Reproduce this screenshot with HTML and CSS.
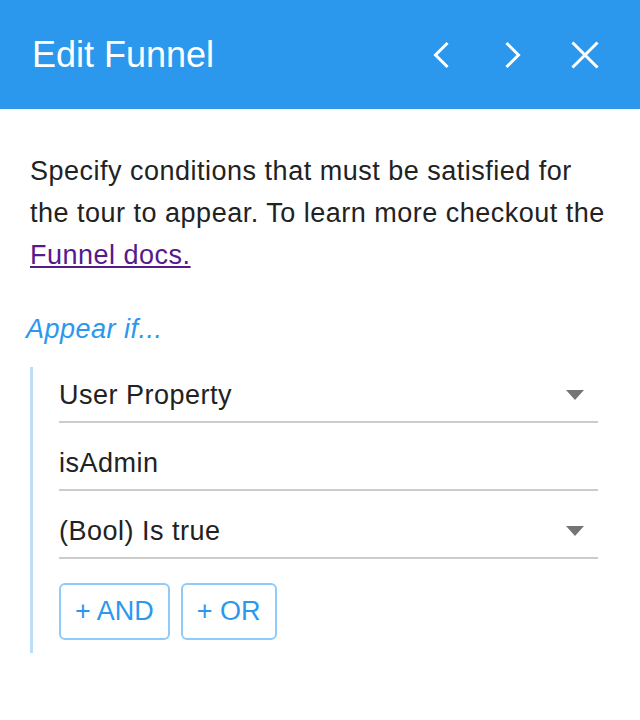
FILE: index.html
```html
<!DOCTYPE html>
<html lang="en">
<head>
<meta charset="utf-8">
<title>Edit Funnel</title>
<link rel="stylesheet" href="styles.css">
</head>
<body>
<div class="panel">
  <header class="header">
    <h1 class="title">Edit Funnel</h1>
    <div class="actions">
      <svg class="icon" viewBox="0 0 40 40" width="40" height="40"><path d="M25.5 9 L14.5 20 L25.5 31" fill="none" stroke="#fff" stroke-width="3" stroke-linecap="square"/></svg>
      <svg class="icon" viewBox="0 0 40 40" width="40" height="40"><path d="M14.5 9 L25.5 20 L14.5 31" fill="none" stroke="#fff" stroke-width="3" stroke-linecap="square"/></svg>
      <svg class="icon" viewBox="0 0 40 40" width="40" height="40"><path d="M8.5 8.5 L31.5 31.5 M31.5 8.5 L8.5 31.5" fill="none" stroke="#fff" stroke-width="3" stroke-linecap="square"/></svg>
    </div>
  </header>
  <main class="content">
    <p class="intro">Specify conditions that must be satisfied for the tour to appear. To learn more checkout the <a class="link" href="#">Funnel docs.</a></p>
    <h2 class="appear">Appear if...</h2>
    <div class="conditions">
      <div class="field">
        <span class="value">User Property</span>
        <span class="caret"></span>
      </div>
      <div class="field">
        <span class="value">isAdmin</span>
      </div>
      <div class="field">
        <span class="value">(Bool) Is true</span>
        <span class="caret"></span>
      </div>
      <div class="buttons">
        <button class="btn">+ AND</button>
        <button class="btn">+ OR</button>
      </div>
    </div>
  </main>
</div>
</body>
</html>
```
FILE: styles.css
```css
* { box-sizing: border-box; }

html, body {
  margin: 0;
  padding: 0;
  background: #ffffff;
}

body {
  font-family: "Liberation Sans", Arial, sans-serif;
  color: #222222;
}

.header {
  height: 109px;
  background: #2b98ee;
  display: flex;
  align-items: center;
  justify-content: space-between;
  padding: 0 35px 0 32px;
}

.title {
  margin: 0;
  font-size: 36px;
  font-weight: normal;
  color: #ffffff;
  line-height: 40px;
}

.actions {
  display: flex;
  align-items: center;
  gap: 32px;
}

.icon {
  display: block;
}

.content {
  padding: 41px 20px 0 30px;
}

.intro {
  margin: 0 6px 0 0;
  font-size: 27px;
  letter-spacing: 0.5px;
  line-height: 42px;
}

.link {
  color: #551a8b;
  text-decoration: underline;
}

.appear {
  margin: 37px 0 0 -4px;
  font-size: 27px;
  letter-spacing: 0.5px;
  line-height: 32px;
  font-style: italic;
  font-weight: normal;
  color: #2b98ee;
}

.conditions {
  margin-top: 22px;
  border-left: 3px solid #bbdefb;
  padding: 0 22px 13px 26px;
}

.field {
  display: flex;
  align-items: center;
  justify-content: space-between;
  padding: 12px 0 10px 0;
  border-bottom: 2px solid #cccccc;
  font-size: 27px;
  letter-spacing: 0.5px;
  line-height: 32px;
  margin-bottom: 12px;
}

.caret {
  width: 0;
  height: 0;
  border-left: 9px solid transparent;
  border-right: 9px solid transparent;
  border-top: 10px solid #757575;
  margin-right: 14px;
}

.buttons {
  display: flex;
  gap: 11px;
  margin-top: 24px;
}

.btn {
  height: 57px;
  padding: 0 14px;
  border: 2px solid #90caf9;
  border-radius: 6px;
  background: #ffffff;
  color: #2b98ee;
  font-family: "Liberation Sans", Arial, sans-serif;
  font-size: 27px;
}
```
